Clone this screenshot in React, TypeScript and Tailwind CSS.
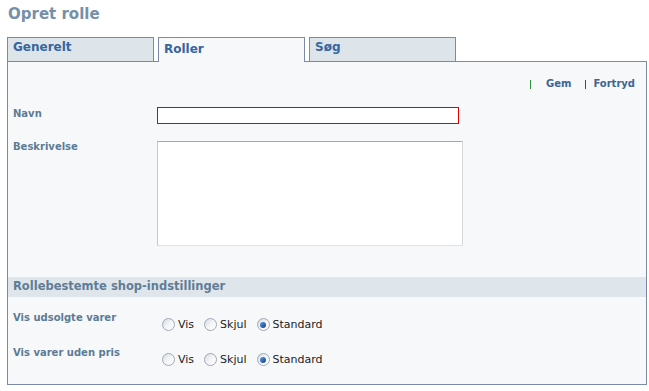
import React from "react";

const tabs = [
    { label: "Generelt", active: false },
    { label: "Roller", active: true },
    { label: "Søg", active: false },
];

function Radio({ checked }: { checked?: boolean }) {
    return (
        <span className="flex h-[13px] w-[13px] items-center justify-center rounded-full border border-[#9fa9b6] bg-gradient-to-br from-[#d6dbe2] via-[#f4f5f7] to-white">
            {checked && (
                <span className="h-[6px] w-[6px] rounded-full bg-gradient-to-br from-[#5b9be8] to-[#123f8a]" />
            )}
        </span>
    );
}

function RadioGroup() {
    const options = ["Vis", "Skjul", "Standard"];
    return (
        <div className="ml-[5px] mt-[6px] flex items-center gap-[10px] text-[11px] leading-[13px] text-[#222]">
            {options.map((o) => (
                <label key={o} className="flex items-center gap-[3px]">
                    <Radio checked={o === "Standard"} />
                    <span>{o}</span>
                </label>
            ))}
        </div>
    );
}

export default function App() {
    return (
        <div className="h-[391px] w-[649px] bg-white font-['DejaVu_Sans',Verdana,sans-serif]">
            <div className="h-[37px] pl-[8px] pt-[5px] text-[15px] font-bold leading-[18px] text-[#7690a9]">
                Opret rolle
            </div>

            {/* tabs */}
            <div className="ml-[7px] flex h-[24px] items-start gap-[4px]">
                {tabs.map((t) =>
                    t.active ? (
                        <div
                            key={t.label}
                            className="relative z-10 h-[25px] w-[147px] border border-b-0 border-[#7b8aa8] bg-[#f6f8fa] pl-[5px] pt-[4px] text-[12px] font-bold leading-[15px] text-[#36659f]"
                        >
                            {t.label}
                        </div>
                    ) : (
                        <div
                            key={t.label}
                            className="h-[24px] w-[147px] border border-b-0 border-[#7b8aa8] bg-[#dde5ea] pl-[5px] pt-[2px] text-[12px] font-bold leading-[15px] text-[#36659f]"
                        >
                            {t.label}
                        </div>
                    )
                )}
            </div>

            {/* panel */}
            <div className="ml-[7px] h-[324px] w-[640px] border border-[#7b8aa8] bg-[#f6f8fa]">
                <div className="flex h-[28px] items-end justify-end pr-[11px] text-[10px] font-bold leading-[12px] text-[#3c6594]">
                    <span className="mb-[1px] h-[9px] w-px bg-[#2f8f3f]" />
                    <span className="ml-[15px]">Gem</span>
                    <span className="mb-[1px] ml-[14px] h-[9px] w-px bg-[#9b2242]" />
                    <span className="ml-[7px]">Fortryd</span>
                </div>

                <div className="mt-[17px] flex">
                    <div className="w-[149px] pl-[5px] pt-[1px] text-[10px] font-bold leading-[12px] text-[#5d7b95]">Navn</div>
                    <input className="h-[17px] w-[302px] border border-[#e00000] bg-white outline-none" />
                </div>

                <div className="mt-[17px] flex">
                    <div className="w-[149px] pl-[5px] text-[10px] font-bold leading-[12px] text-[#5d7b95]">Beskrivelse</div>
                    <textarea className="h-[105px] w-[306px] resize-none border border-b-[#dde2e8] border-l-[#c4c8cd] border-r-[#d4d9e0] border-t-[#a5a9ae] bg-white outline-none" />
                </div>

                <div className="mt-[31px] h-[20px] bg-[#dfe6eb] pl-[5px] pt-[2px] text-[11.5px] font-bold leading-[15px] text-[#5f7d96]">
                    Rollebestemte shop-indstillinger
                </div>

                <div className="mt-[15px] flex h-[35px] items-start">
                    <div className="w-[149px] pl-[5px] text-[10px] font-bold leading-[12px] text-[#5d7b95]">Vis udsolgte varer</div>
                    <RadioGroup />
                </div>
                <div className="flex h-[35px] items-start">
                    <div className="w-[149px] pl-[5px] text-[10px] font-bold leading-[12px] text-[#5d7b95]">Vis varer uden pris</div>
                    <RadioGroup />
                </div>
            </div>
        </div>
    );
}
